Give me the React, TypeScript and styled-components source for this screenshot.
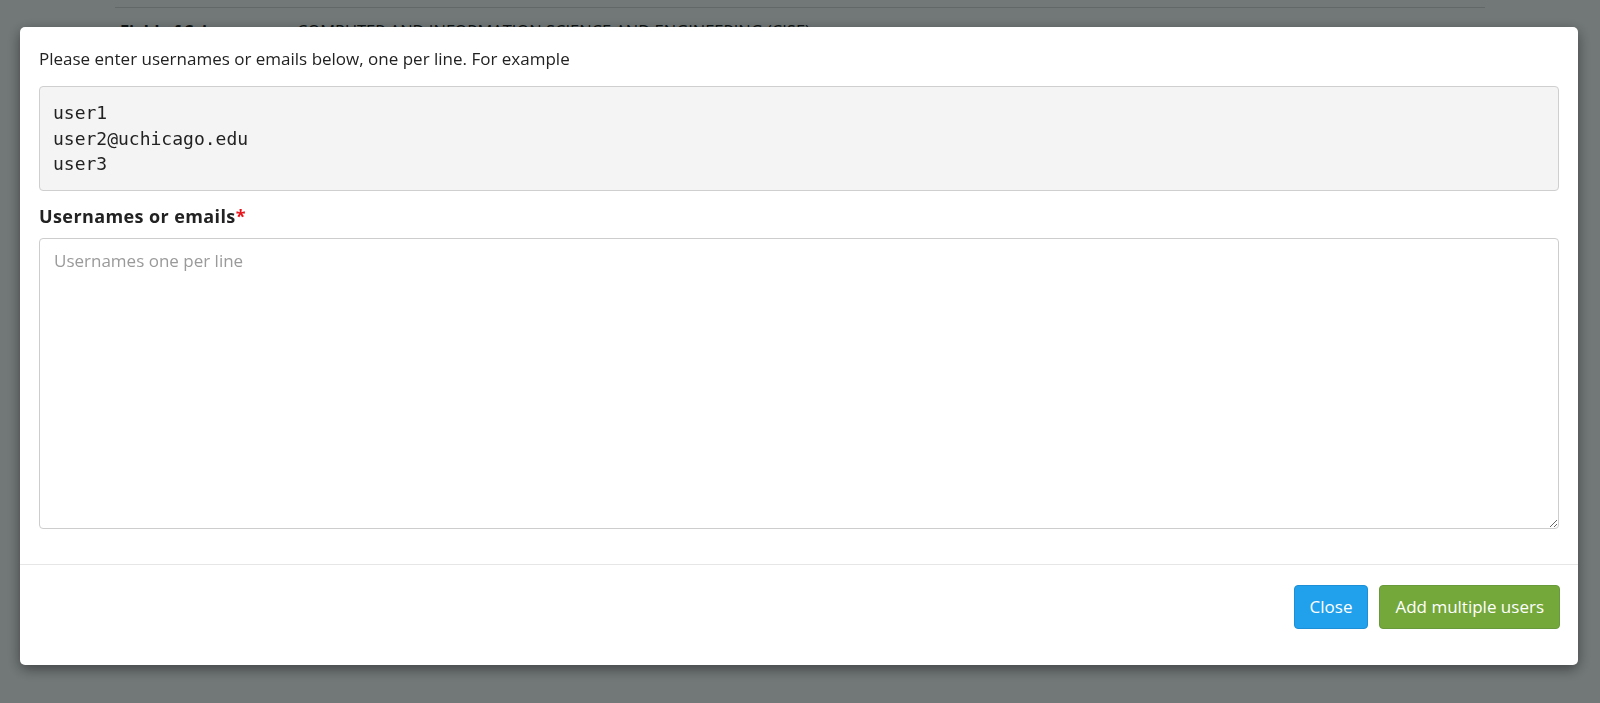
import React from "react";
import styled, { createGlobalStyle } from "styled-components";

const GlobalStyle = createGlobalStyle`
  html, body { margin: 0; padding: 0; background: #ffffff; }
  body { font-family: "Open Sans", "Noto Sans", sans-serif; color: #222; }
  * { box-sizing: border-box; }
`;

const Page = styled.div`
  margin: 0 115px;
  padding-top: 7px;
`;

const InfoRow = styled.div`
  display: flex;
  border-top: 1px solid #dcdcdc;
  padding-top: 9px;
  font-size: 16.5px;
  line-height: 27px;
`;

const InfoKey = styled.div`
  width: 182px;
  padding-left: 5px;
  font-weight: 700;
`;

const InfoValue = styled.div``;

const Backdrop = styled.div`
  position: fixed;
  inset: 0;
  background: rgba(0, 11, 11, 0.553);
`;

const Modal = styled.div`
  position: fixed;
  left: 20px;
  right: 22px;
  top: 27px;
  background: #fff;
  border-radius: 5px;
  box-shadow: 0 4px 14px rgba(0, 0, 0, 0.45);
  display: flex;
  flex-direction: column;
`;

const ModalBody = styled.div`
  display: flex;
  flex-direction: column;
  padding: 18px 19px 35px 19px;
`;

const Intro = styled.p`
  margin: 0 0 14px;
  font-size: 17px;
  line-height: 27px;
  color: #222;
`;

const Example = styled.pre`
  margin: 0;
  padding: 13px 13px;
  background: #f4f4f4;
  border: 1px solid #cfcfcf;
  border-radius: 4px;
  font-family: "DejaVu Sans Mono", monospace;
  font-size: 18px;
  line-height: 25.5px;
  color: #222;
`;

const Label = styled.label`
  margin: 12px 0 8px;
  font-size: 18px;
  letter-spacing: 0.4px;
  line-height: 27px;
  font-weight: 700;
  color: #222;
`;

const Required = styled.span`
  color: #e8141b;
`;

const TextArea = styled.textarea`
  display: block;
  width: 100%;
  height: 291px;
  padding: 8px 14px;
  border: 1px solid #cdcdcd;
  border-radius: 4px;
  font-family: "Open Sans", "Noto Sans", sans-serif;
  font-size: 17px;
  line-height: 27px;
  color: #222;
  outline: none;
  &::placeholder { color: #9a9a9a; }
`;

const Footer = styled.div`
  display: flex;
  justify-content: flex-end;
  gap: 11px;
  padding: 20px 18px 36px;
  border-top: 1px solid #e6e6e6;
`;

const Button = styled.button<{ $variant: "primary" | "success" }>`
  height: 44px;
  padding: 0 15px;
  border-radius: 4px;
  border: 1px solid ${(p) => (p.$variant === "primary" ? "#1c8fd6" : "#68993a")};
  background: ${(p) => (p.$variant === "primary" ? "#21a0ec" : "#74a83a")};
  color: #fff;
  font-family: "Open Sans", "Noto Sans", sans-serif;
  font-size: 17px;
  font-weight: 500;
  cursor: pointer;
`;

export default function App() {
  return (
    <>
      <GlobalStyle />
      <Page>
        <InfoRow>
          <InfoKey>Field of Science</InfoKey>
          <InfoValue>COMPUTER AND INFORMATION SCIENCE AND ENGINEERING (CISE)</InfoValue>
        </InfoRow>
      </Page>
      <Backdrop />
      <Modal>
        <ModalBody>
          <Intro>Please enter usernames or emails below, one per line. For example</Intro>
          <Example>{"user1\nuser2@uchicago.edu\nuser3"}</Example>
          <Label htmlFor="users">
            Usernames or emails<Required>*</Required>
          </Label>
          <TextArea id="users" placeholder="Usernames one per line" />
        </ModalBody>
        <Footer>
          <Button $variant="primary">Close</Button>
          <Button $variant="success">Add multiple users</Button>
        </Footer>
      </Modal>
    </>
  );
}
